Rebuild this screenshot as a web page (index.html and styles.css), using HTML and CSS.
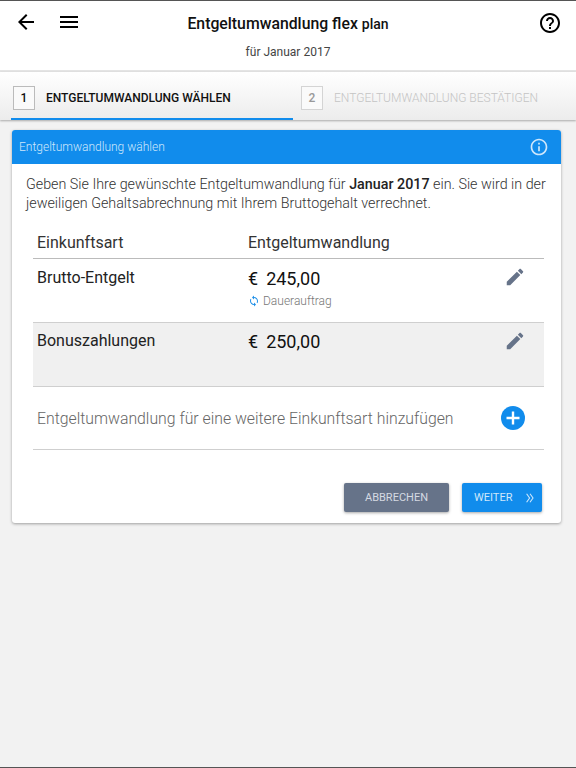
FILE: index.html
```html
<!DOCTYPE html>
<html lang="de">
<head>
    <meta charset="UTF-8">
    <meta name="viewport" content="width=device-width, initial-scale=1.0">
    <title>Entgeltumwandlung flex plan</title>
    <link rel="stylesheet" href="styles.css">
</head>
<body>
    <header class="topbar">
        <div class="topbar-left">
            <svg width="24" height="24" viewBox="0 0 24 24"><path d="M20 11H7.83l5.59-5.59L12 4l-8 8 8 8 1.41-1.41L7.83 13H20v-2z"/></svg>
            <svg width="24" height="24" viewBox="0 0 24 24"><path d="M3 18h18v-2H3v2zm0-5h18v-2H3v2zm0-7v2h18V6H3z"/></svg>
        </div>
        <div class="topbar-title">
            <h1>Entgeltumwandlung flex <small>plan</small></h1>
            <p>für Januar 2017</p>
        </div>
        <svg class="icon-help" width="24" height="24" viewBox="0 0 24 24"><path d="M11 18h2v-2h-2v2zm1-16C6.48 2 2 6.48 2 12s4.48 10 10 10 10-4.48 10-10S17.52 2 12 2zm0 18c-4.41 0-8-3.59-8-8s3.59-8 8-8 8 3.59 8 8-3.59 8-8 8zm0-14c-2.21 0-4 1.79-4 4h2c0-1.1.9-2 2-2s2 .9 2 2c0 2-3 1.75-3 5h2c0-2.25 3-2.5 3-5 0-2.21-1.79-4-4-4z"/></svg>
    </header>

    <nav class="steps">
        <div class="step active">
            <span class="step-num">1</span>
            <span class="step-label">ENTGELTUMWANDLUNG WÄHLEN</span>
        </div>
        <div class="step">
            <span class="step-num">2</span>
            <span class="step-label">ENTGELTUMWANDLUNG BESTÄTIGEN</span>
        </div>
    </nav>

    <section class="card">
        <div class="card-head">
            <span>Entgeltumwandlung wählen</span>
            <svg width="20" height="20" viewBox="0 0 24 24"><path d="M11 7h2v2h-2zm0 4h2v6h-2zm1-9C6.48 2 2 6.48 2 12s4.48 10 10 10 10-4.48 10-10S17.52 2 12 2zm0 18c-4.41 0-8-3.59-8-8s3.59-8 8-8 8 3.59 8 8-3.59 8-8 8z"/></svg>
        </div>
        <p class="intro">Geben Sie Ihre gewünschte Entgeltumwandlung für <b>Januar 2017</b> ein. Sie wird in der jeweiligen Gehaltsabrechnung mit Ihrem Bruttogehalt verrechnet.</p>

        <div class="table">
            <div class="row row-head">
                <div class="col-type">Einkunftsart</div>
                <div class="col-amount">Entgeltumwandlung</div>
            </div>
            <div class="row">
                <div class="col-type">Brutto-Entgelt</div>
                <div class="col-amount">
                    <div class="amount"><span>€</span><span>245,00</span></div>
                    <div class="standing">
                        <svg width="12" height="12" viewBox="0 0 24 24"><path d="M12 4V1L8 5l4 4V6c3.31 0 6 2.69 6 6 0 1.01-.25 1.97-.7 2.8l1.46 1.46C19.54 15.03 20 13.57 20 12c0-4.42-3.58-8-8-8zm0 14c-3.31 0-6-2.69-6-6 0-1.01.25-1.97.7-2.8L5.24 7.74C4.46 8.97 4 10.43 4 12c0 4.42 3.58 8 8 8v3l4-4-4-4v3z"/></svg>
                        Dauerauftrag
                    </div>
                </div>
                <svg class="icon-edit" width="22" height="22" viewBox="0 0 24 24"><path d="M3 17.25V21h3.75L17.81 9.94l-3.75-3.75L3 17.25zM20.71 7.04c.39-.39.39-1.02 0-1.41l-2.34-2.34c-.39-.39-1.02-.39-1.41 0l-1.83 1.83 3.75 3.75 1.83-1.83z"/></svg>
            </div>
            <div class="row row-alt">
                <div class="col-type">Bonuszahlungen</div>
                <div class="col-amount">
                    <div class="amount"><span>€</span><span>250,00</span></div>
                </div>
                <svg class="icon-edit" width="22" height="22" viewBox="0 0 24 24"><path d="M3 17.25V21h3.75L17.81 9.94l-3.75-3.75L3 17.25zM20.71 7.04c.39-.39.39-1.02 0-1.41l-2.34-2.34c-.39-.39-1.02-.39-1.41 0l-1.83 1.83 3.75 3.75 1.83-1.83z"/></svg>
            </div>
            <div class="row row-add">
                <span>Entgeltumwandlung für eine weitere Einkunftsart hinzufügen</span>
                <svg width="24" height="24" viewBox="0 0 24 24"><circle cx="12" cy="12" r="12" fill="#118cec"/><path d="M10.8 5.5h2.4v5.3h5.3v2.4h-5.3v5.3h-2.4v-5.3H5.5v-2.4h5.3z" fill="#fff"/></svg>
            </div>
        </div>

        <div class="actions">
            <button class="btn btn-cancel">ABBRECHEN</button>
            <button class="btn btn-next">WEITER
                <svg width="8" height="10" viewBox="0 0 8 10"><path d="M.6.8 3.6 5 .6 9.2M4 .8 7 5 4 9.2" fill="none" stroke="currentColor" stroke-width="1.1"/></svg>
            </button>
        </div>
    </section>
</body>
</html>
```

FILE: styles.css
```css
html, body {
    height: 100%;
}
body {
    margin: 0;
    font-family: Roboto, Arial, sans-serif;
    background-color: #f2f2f2;
    color: #222;
    border-top: 1px solid #555;
    border-bottom: 1px solid #555;
    box-sizing: border-box;
    overflow: hidden;
}
.topbar {
    display: grid;
    grid-template-columns: 1fr auto 1fr;
    align-items: start;
    box-sizing: border-box;
    height: 71px;
    padding: 9px 14px 0 14px;
    background-color: #fff;
    border-bottom: 2px solid #e4e4e4;
}
.topbar-left {
    display: flex;
    gap: 19px;
}
.topbar-left svg {
    display: block;
}
.topbar-title {
    text-align: center;
}
.topbar-title h1 {
    margin: 3px 0 0;
    font-size: 15.8px;
    line-height: 22px;
    font-weight: 500;
    color: #111;
}
.topbar-title small {
    font-size: 14px;
}
.topbar-title p {
    margin: 8px 0 0;
    font-size: 12px;
    line-height: 18px;
    color: #444;
}
.icon-help {
    justify-self: end;
    margin-top: 1px;
}
.steps {
    display: flex;
    height: 48px;
    padding-left: 11px;
    background: linear-gradient(#fff, #ececec);
    box-shadow: 0 1px 2px rgba(0, 0, 0, 0.3);
}
.step {
    display: flex;
    align-items: center;
    gap: 11px;
    box-sizing: border-box;
    padding: 4px 0 0 3px;
    color: #c4c4c4;
    font-size: 12px;
}
.step.active {
    width: 282px;
    padding: 6px 0 0 2px;
    margin-right: 5px;
    color: #111;
    font-weight: 500;
    border-bottom: 2px solid #118cec;
}
.step-num {
    display: block;
    width: 20px;
    height: 22px;
    line-height: 22px;
    text-align: center;
    border: 1px solid #bbb;
    font-size: 12px;
    font-weight: 500;
    background-color: #fafafa;
}
.step:not(.active) .step-num {
    border-color: #d4d4d4;
    color: #999;
}
.step:not(.active) .step-label {
    font-weight: 300;
}
.card {
    margin: 10px 15px 0 12px;
    background-color: #fff;
    border-radius: 3px;
    box-shadow: 0 1px 3px rgba(0, 0, 0, 0.35);
    padding-bottom: 11px;
}
.card-head {
    display: flex;
    align-items: center;
    justify-content: space-between;
    height: 34px;
    padding: 0 12px 0 7px;
    background-color: #118cec;
    color: #cfe7fb;
    border-radius: 3px 3px 0 0;
    font-size: 12px;
    font-weight: 300;
}
.card-head svg {
    fill: #cfe7fb;
}
.intro {
    margin: 0;
    padding: 11px 8px 0 14px;
    font-size: 14.3px;
    font-weight: 300;
    line-height: 19px;
    color: #333;
}
.intro b {
    font-weight: 500;
    color: #222;
}
.table {
    margin: 17px 17px 0 21px;
}
.row {
    display: flex;
    box-sizing: border-box;
    height: 64px;
    padding: 9px 0 0 4px;
    border-bottom: 1px solid #cfcfcf;
    font-size: 16px;
    color: #222;
}
.row-head {
    height: 29px;
    padding-top: 2px;
    border-bottom-color: #bbb;
    color: #333;
}
.row-alt {
    padding-top: 8px;
    background-color: #f0f0f0;
}
.row-alt .icon-edit {
    margin-top: -1px;
}
.col-type {
    width: 211px;
    line-height: 20px;
}
.row-head .col-type,
.row-head .col-amount {
    line-height: 22px;
}
.col-amount {
    flex: 1;
}
.amount {
    display: flex;
    gap: 8px;
    margin-top: -1px;
    font-size: 18px;
    line-height: 24px;
    color: #111;
}
.standing {
    display: flex;
    align-items: center;
    gap: 3px;
    margin-top: 3px;
    font-size: 12px;
    font-weight: 300;
    color: #777;
}
.standing svg {
    fill: #1d8fe8;
}
.icon-edit {
    margin: -2px 18px 0 0;
    fill: #667389;
}
.row-add {
    align-items: center;
    justify-content: space-between;
    height: 63px;
    padding: 0 19px 0 4px;
    font-size: 15.8px;
    font-weight: 300;
    color: #666;
}
.actions {
    display: flex;
    justify-content: flex-end;
    gap: 13px;
    margin: 33px 19px 0 0;
}
.btn {
    height: 29px;
    padding: 0;
    border: none;
    border-radius: 2px;
    font-family: inherit;
    font-size: 11px;
    box-shadow: 0 1px 3px rgba(0, 0, 0, 0.35);
}
.btn-cancel {
    width: 105px;
    background-color: #667389;
    color: #d5dae2;
}
.btn-next {
    display: flex;
    align-items: center;
    justify-content: space-between;
    width: 80px;
    padding: 0 8px 0 12px;
    background-color: #118cec;
    color: #cfe7fb;
}
```
